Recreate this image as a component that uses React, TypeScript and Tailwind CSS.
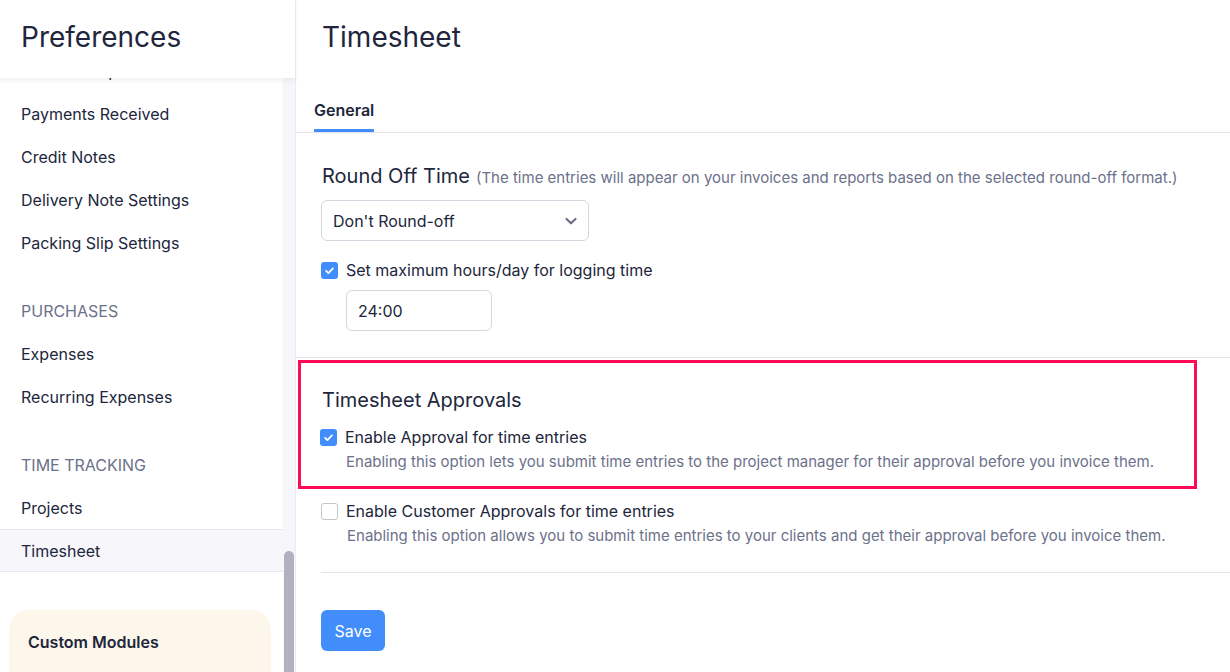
import React from "react";

const font = { fontFamily: "Inter, 'Noto Sans', sans-serif" };

function Check({ checked }: { checked: boolean }) {
  if (checked) {
    return (
      <span className="flex h-[17px] w-[17px] shrink-0 items-center justify-center rounded-[3px] bg-[#408dfb]">
        <svg width="11" height="11" viewBox="0 0 12 12" fill="none">
          <path d="M2.3 6.3l2.5 2.5 4.9-5.2" stroke="#fff" strokeWidth="1.9" strokeLinecap="round" strokeLinejoin="round" />
        </svg>
      </span>
    );
  }
  return <span className="h-[17px] w-[17px] shrink-0 rounded-[3px] border border-[#c4c4cc] bg-white" />;
}

function NavItem({ label, active }: { label: string; active?: boolean }) {
  return (
    <div
      className={
        "flex h-[43px] items-center pl-[21px] text-[16px] text-[#21263c] " +
        (active ? "border-y border-[#e6e7ef] bg-[#f7f7fb]" : "")
      }
    >
      {label}
    </div>
  );
}

function SectionHead({ label }: { label: string }) {
  return (
    <div className="mt-[25px] flex h-[43px] items-center pl-[21px] text-[16px] uppercase text-[#6c718a]">
      {label}
    </div>
  );
}

export default function App() {
  return (
    <div className="flex h-[672px] w-[1230px] overflow-hidden bg-white" style={font}>
      {/* Sidebar */}
      <aside className="flex h-full w-[296px] shrink-0 flex-col border-r border-[#ebebf2]">
        <div className="relative z-10 flex h-[78px] shrink-0 items-start bg-white pl-[21px] pt-[19px] shadow-[0_3px_6px_rgba(0,0,0,0.06)]">
          <h1 className="text-[28px] font-normal leading-[36px] text-[#21263c]">Preferences</h1>
        </div>
        <div className="flex min-h-0 flex-1">
          <div className="min-h-0 w-[283px] overflow-hidden">
            <div className="-mt-[29px]">
              <NavItem label="Sales Receipts" />
              <NavItem label="Payments Received" />
              <NavItem label="Credit Notes" />
              <NavItem label="Delivery Note Settings" />
              <NavItem label="Packing Slip Settings" />
              <SectionHead label="Purchases" />
              <NavItem label="Expenses" />
              <NavItem label="Recurring Expenses" />
              <SectionHead label="Time Tracking" />
              <NavItem label="Projects" />
              <NavItem label="Timesheet" active />
              <div className="ml-[9px] mt-[38px] h-[120px] w-[262px] rounded-[20px] bg-[#fdf6ea] pl-[19px] pt-[22px]">
                <div className="text-[16px] font-semibold leading-[20px] text-[#21263c]">Custom Modules</div>
              </div>
            </div>
          </div>
          <div className="flex w-[12px] flex-col bg-[#f6f6fb]">
            <div className="h-[473px]" />
            <div className="ml-px w-[10px] flex-1 rounded-t-full bg-[#b3b0bf]" />
          </div>
        </div>
      </aside>

      {/* Main */}
      <main className="flex min-w-0 flex-1 flex-col">
        <div className="flex h-[78px] shrink-0 items-start pl-[26px] pt-[19px]">
          <h2 className="text-[28px] font-normal leading-[36px] text-[#21263c]">Timesheet</h2>
        </div>
        <div className="flex h-[55px] border-b border-[#e3e4ec]">
          <div className="ml-[18px] border-b-[3px] border-[#408dfb] pt-[22px] pb-[9px] text-[16px] font-semibold leading-[20px] text-[#21263c]">
            General
          </div>
        </div>

        <div className="pl-[26px]">
          <div className="mt-[29px] flex items-baseline leading-[28px]">
            <span className="text-[20px] text-[#21263c]">Round Off Time</span>
            <span className="ml-[6px] text-[15px] text-[#6c718a]">
              (The time entries will appear on your invoices and reports based on the selected round-off format.)
            </span>
          </div>
          <div className="-ml-px mt-[8px] flex h-[41px] w-[268px] items-center justify-between rounded-[6px] border border-[#d6d6e0] pl-[11px] pr-[10px]">
            <span className="text-[16px] text-[#21263c]">Don't Round-off</span>
            <svg width="14" height="14" viewBox="0 0 14 14" fill="none">
              <path d="M2.5 5l4.5 4.3L11.5 5" stroke="#6b6e80" strokeWidth="2.2" strokeLinecap="round" strokeLinejoin="round" />
            </svg>
          </div>
          <div className="-ml-px mt-[19px] flex h-[20px] items-center gap-[8px]">
            <Check checked />
            <span className="text-[16px] text-[#21263c]">Set maximum hours/day for logging time</span>
          </div>
          <div className="ml-[24px] mt-[10px] flex h-[41px] w-[146px] items-center rounded-[6px] border border-[#d6d6e0] pl-[11px] text-[16px] text-[#21263c]">
            24:00
          </div>
        </div>

        <div className="mt-[26px] border-t border-[#e3e4ec]" />

        <div className="ml-[2px] mt-[2px] w-[899px] border-[3px] border-[#ff0a54] pb-[14px] pl-[21px] pt-[23px]">
          <div className="text-[20px] leading-[28px] text-[#21263c]">Timesheet Approvals</div>
          <div className="-ml-[2px] mt-[13px] flex h-[20px] items-center gap-[8px]">
            <Check checked />
            <span className="text-[16px] text-[#21263c]">Enable Approval for time entries</span>
          </div>
          <div className="ml-[24px] mt-[5px] text-[15px] leading-[20px] text-[#6c718a]">
            Enabling this option lets you submit time entries to the project manager for their approval before you invoice them.
          </div>
        </div>

        <div className="pl-[25px]">
          <div className="mt-[12px] flex h-[20px] items-center gap-[8px]">
            <Check checked={false} />
            <span className="text-[16px] text-[#21263c]">Enable Customer Approvals for time entries</span>
          </div>
          <div className="ml-[26px] mt-[5px] text-[15px] leading-[20px] text-[#6c718a]">
            Enabling this option allows you to submit time entries to your clients and get their approval before you invoice them.
          </div>
          <div className="mt-[26px] border-t border-[#e3e4ec]" />
          <button className="mt-[37px] flex h-[41px] w-[64px] items-center justify-center rounded-[6px] bg-[#408dfb] text-[16px] text-white">
            Save
          </button>
        </div>
      </main>
    </div>
  );
}
